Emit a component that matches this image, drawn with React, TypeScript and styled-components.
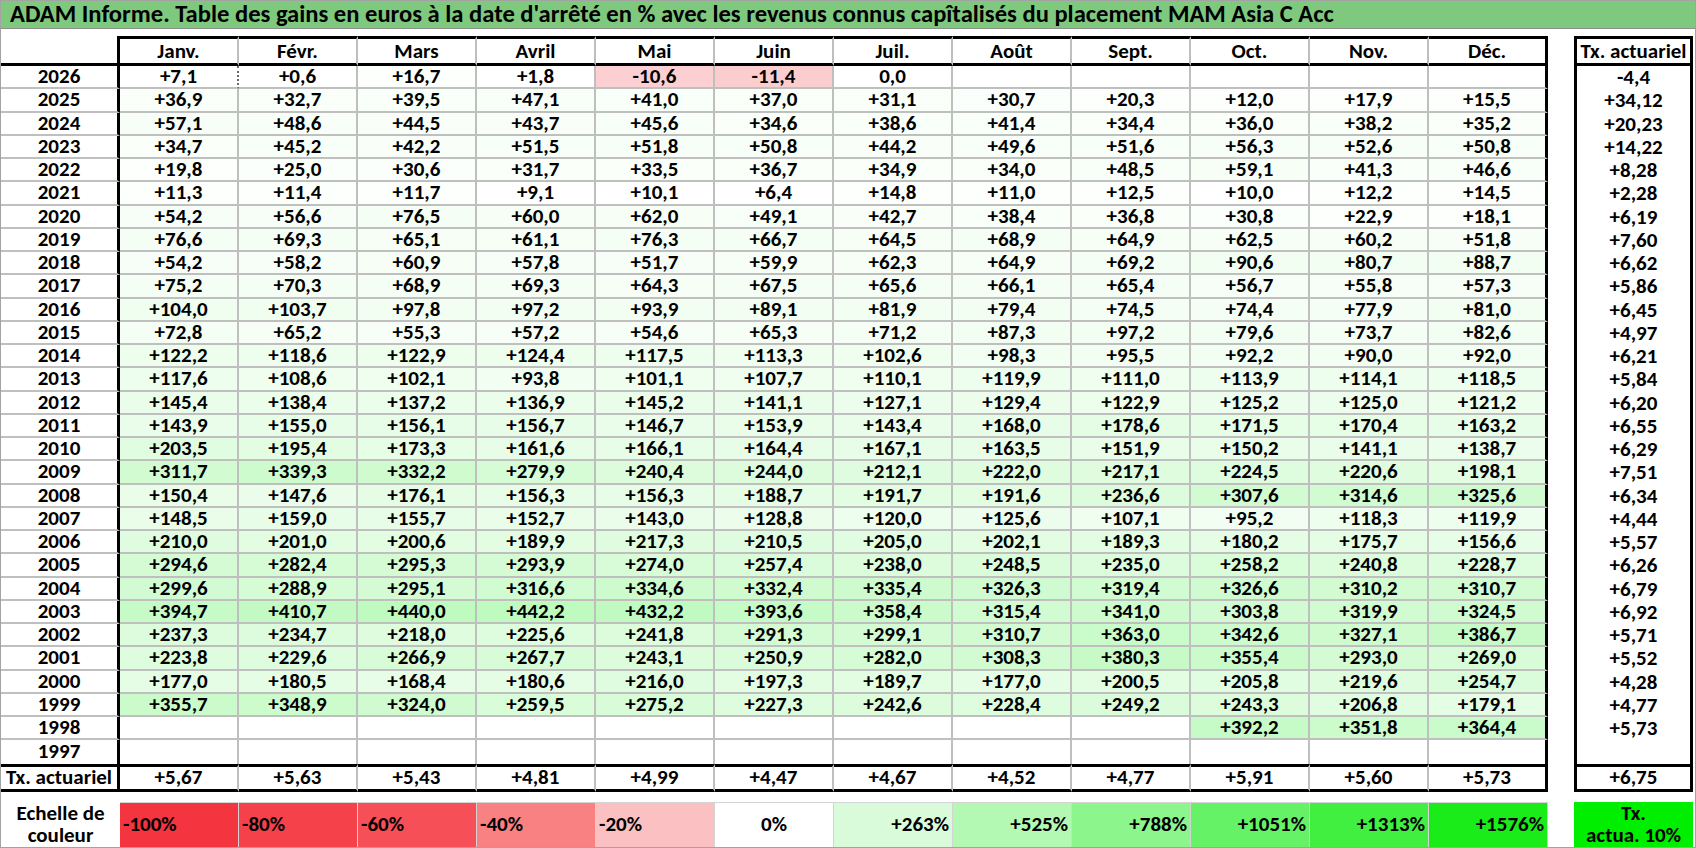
import { Fragment } from 'react';
import styled, { createGlobalStyle } from 'styled-components';

const GlobalStyle = createGlobalStyle`
  html, body {
    margin: 0;
    padding: 0;
    background: #ffffff;
  }
  body {
    font-family: Carlito, Lato, 'Liberation Sans', sans-serif;
    color: #000;
  }
`;

const months = ['Janv.', 'Févr.', 'Mars', 'Avril', 'Mai', 'Juin', 'Juil.', 'Août', 'Sept.', 'Oct.', 'Nov.', 'Déc.'];

// year | 12 monthly gains ('.' = empty) | tx actuariel
const raw = [
  '2026|+7,1 +0,6 +16,7 +1,8 -10,6 -11,4 0,0 . . . . .|-4,4',
  '2025|+36,9 +32,7 +39,5 +47,1 +41,0 +37,0 +31,1 +30,7 +20,3 +12,0 +17,9 +15,5|+34,12',
  '2024|+57,1 +48,6 +44,5 +43,7 +45,6 +34,6 +38,6 +41,4 +34,4 +36,0 +38,2 +35,2|+20,23',
  '2023|+34,7 +45,2 +42,2 +51,5 +51,8 +50,8 +44,2 +49,6 +51,6 +56,3 +52,6 +50,8|+14,22',
  '2022|+19,8 +25,0 +30,6 +31,7 +33,5 +36,7 +34,9 +34,0 +48,5 +59,1 +41,3 +46,6|+8,28',
  '2021|+11,3 +11,4 +11,7 +9,1 +10,1 +6,4 +14,8 +11,0 +12,5 +10,0 +12,2 +14,5|+2,28',
  '2020|+54,2 +56,6 +76,5 +60,0 +62,0 +49,1 +42,7 +38,4 +36,8 +30,8 +22,9 +18,1|+6,19',
  '2019|+76,6 +69,3 +65,1 +61,1 +76,3 +66,7 +64,5 +68,9 +64,9 +62,5 +60,2 +51,8|+7,60',
  '2018|+54,2 +58,2 +60,9 +57,8 +51,7 +59,9 +62,3 +64,9 +69,2 +90,6 +80,7 +88,7|+6,62',
  '2017|+75,2 +70,3 +68,9 +69,3 +64,3 +67,5 +65,6 +66,1 +65,4 +56,7 +55,8 +57,3|+5,86',
  '2016|+104,0 +103,7 +97,8 +97,2 +93,9 +89,1 +81,9 +79,4 +74,5 +74,4 +77,9 +81,0|+6,45',
  '2015|+72,8 +65,2 +55,3 +57,2 +54,6 +65,3 +71,2 +87,3 +97,2 +79,6 +73,7 +82,6|+4,97',
  '2014|+122,2 +118,6 +122,9 +124,4 +117,5 +113,3 +102,6 +98,3 +95,5 +92,2 +90,0 +92,0|+6,21',
  '2013|+117,6 +108,6 +102,1 +93,8 +101,1 +107,7 +110,1 +119,9 +111,0 +113,9 +114,1 +118,5|+5,84',
  '2012|+145,4 +138,4 +137,2 +136,9 +145,2 +141,1 +127,1 +129,4 +122,9 +125,2 +125,0 +121,2|+6,20',
  '2011|+143,9 +155,0 +156,1 +156,7 +146,7 +153,9 +143,4 +168,0 +178,6 +171,5 +170,4 +163,2|+6,55',
  '2010|+203,5 +195,4 +173,3 +161,6 +166,1 +164,4 +167,1 +163,5 +151,9 +150,2 +141,1 +138,7|+6,29',
  '2009|+311,7 +339,3 +332,2 +279,9 +240,4 +244,0 +212,1 +222,0 +217,1 +224,5 +220,6 +198,1|+7,51',
  '2008|+150,4 +147,6 +176,1 +156,3 +156,3 +188,7 +191,7 +191,6 +236,6 +307,6 +314,6 +325,6|+6,34',
  '2007|+148,5 +159,0 +155,7 +152,7 +143,0 +128,8 +120,0 +125,6 +107,1 +95,2 +118,3 +119,9|+4,44',
  '2006|+210,0 +201,0 +200,6 +189,9 +217,3 +210,5 +205,0 +202,1 +189,3 +180,2 +175,7 +156,6|+5,57',
  '2005|+294,6 +282,4 +295,3 +293,9 +274,0 +257,4 +238,0 +248,5 +235,0 +258,2 +240,8 +228,7|+6,26',
  '2004|+299,6 +288,9 +295,1 +316,6 +334,6 +332,4 +335,4 +326,3 +319,4 +326,6 +310,2 +310,7|+6,79',
  '2003|+394,7 +410,7 +440,0 +442,2 +432,2 +393,6 +358,4 +315,4 +341,0 +303,8 +319,9 +324,5|+6,92',
  '2002|+237,3 +234,7 +218,0 +225,6 +241,8 +291,3 +299,1 +310,7 +363,0 +342,6 +327,1 +386,7|+5,71',
  '2001|+223,8 +229,6 +266,9 +267,7 +243,1 +250,9 +282,0 +308,3 +380,3 +355,4 +293,0 +269,0|+5,52',
  '2000|+177,0 +180,5 +168,4 +180,6 +216,0 +197,3 +189,7 +177,0 +200,5 +205,8 +219,6 +254,7|+4,28',
  '1999|+355,7 +348,9 +324,0 +259,5 +275,2 +227,3 +242,6 +228,4 +249,2 +243,3 +206,8 +179,1|+4,77',
  '1998|. . . . . . . . . +392,2 +351,8 +364,4|+5,73',
  '1997|. . . . . . . . . . . .|.',
];

const rows = raw.map((line) => {
  const [year, values, tx] = line.split('|');
  return {
    year,
    values: values.split(' ').map((v) => (v === '.' ? '' : v)),
    tx: tx === '.' ? '' : tx,
  };
});

const yearlyTx = ['+5,67', '+5,63', '+5,43', '+4,81', '+4,99', '+4,47', '+4,67', '+4,52', '+4,77', '+5,91', '+5,60', '+5,73'];

const scale = [
  { label: '-100%', bg: '#f4343e', align: 'left' },
  { label: '-80%', bg: '#f5414a', align: 'left' },
  { label: '-60%', bg: '#f64f57', align: 'left' },
  { label: '-40%', bg: '#f98182', align: 'left' },
  { label: '-20%', bg: '#fbc0c2', align: 'left' },
  { label: '0%', bg: '#ffffff', align: 'center' },
  { label: '+263%', bg: '#d9fbd9', align: 'right' },
  { label: '+525%', bg: '#b3f8b3', align: 'right' },
  { label: '+788%', bg: '#8cf58c', align: 'right' },
  { label: '+1051%', bg: '#66f266', align: 'right' },
  { label: '+1313%', bg: '#40ef40', align: 'right' },
  { label: '+1576%', bg: '#1aec1a', align: 'right' },
];

const mix = (t: number, r: number, g: number, b: number) => {
  const c = (to: number) => Math.round(255 + (to - 255) * t);
  return `rgb(${c(r)}, ${c(g)}, ${c(b)})`;
};

const cellColor = (text: string) => {
  if (!text) return '#ffffff';
  const v = parseFloat(text.replace(',', '.'));
  if (v < 0) return mix(Math.min(1, -v / 46), 244, 52, 62);
  return mix(Math.min(1, v / 1576), 26, 236, 26);
};

const THICK = '3px solid #000';
const GRID = '2px solid #bfbfbf';
const COLUMNS = '119px repeat(12, 119px) 26px 119px';

const App = () => {
  return (
    <>
      <GlobalStyle />
      <Frame>
        <TitleBar>
          ADAM Informe. Table des gains en euros à la date d'arrêté en % avec les revenus connus capîtalisés du placement MAM Asia C Acc
        </TitleBar>

        <Sheet>
          <YearHead />
          {months.map((m, i) => (
            <MonthHead key={m} $last={i === 11}>
              {m}
            </MonthHead>
          ))}
          <Spacer />
          <TxHead>Tx. actuariel</TxHead>

          {rows.map((row, r) => {
            const lastRow = r === rows.length - 1;
            return (
              <Fragment key={row.year}>
                <YearCell $lastRow={lastRow}>{row.year}</YearCell>
                {row.values.map((v, i) => (
                  <ValueCell
                    key={i}
                    $bg={cellColor(v)}
                    $last={i === 11}
                    $lastRow={lastRow}
                    $dotted={r === 0 && i === 0}
                  >
                    {v}
                  </ValueCell>
                ))}
                <Spacer />
                <TxCell>{row.tx}</TxCell>
              </Fragment>
            );
          })}

          <FooterLabel>Tx. actuariel</FooterLabel>
          {yearlyTx.map((v, i) => (
            <FooterCell key={i} $last={i === 11}>
              {v}
            </FooterCell>
          ))}
          <Spacer />
          <FooterTx>+6,75</FooterTx>
        </Sheet>

        <ScaleRow>
          <ScaleLabel>
            <span>Echelle de</span>
            <span>couleur</span>
          </ScaleLabel>
          {scale.map((s) => (
            <ScaleCell key={s.label} $bg={s.bg} $align={s.align}>
              {s.label}
            </ScaleCell>
          ))}
          <Spacer />
          <ScaleTx>
            <span>Tx.</span>
            <span>actua. 10%</span>
          </ScaleTx>
        </ScaleRow>
      </Frame>
    </>
  );
};

export default App;

const Frame = styled.div`
  width: 1696px;
  height: 848px;
  box-sizing: border-box;
  border: 1px solid #a3a3a3;
  background: #fff;
  overflow: hidden;
`;

const TitleBar = styled.div`
  height: 28px;
  box-sizing: border-box;
  display: flex;
  align-items: center;
  padding-left: 9px;
  background: #7fc97f;
  border-bottom: 1px solid #8d8d8d;
  font-size: 24.6px;
  line-height: 1;
  font-weight: 700;
  white-space: nowrap;
`;

const Sheet = styled.div`
  display: grid;
  grid-template-columns: ${COLUMNS};
  grid-template-rows: 30px repeat(30, 23.25px) 28px;
  margin-top: 7px;
  font-size: 21px;
  line-height: 1;
  font-weight: 700;
`;

const CellBase = styled.div`
  box-sizing: border-box;
  display: flex;
  align-items: center;
  justify-content: center;
  white-space: nowrap;
`;

const YearHead = styled(CellBase)`
  border-right: ${THICK};
  border-bottom: ${THICK};
`;

const MonthHead = styled(CellBase)<{ $last?: boolean }>`
  border-top: ${THICK};
  border-bottom: ${THICK};
  border-right: ${(p) => (p.$last ? THICK : GRID)};
`;

const Spacer = styled.div``;

const TxHead = styled(CellBase)`
  border: ${THICK};
`;

const YearCell = styled(CellBase)<{ $lastRow?: boolean }>`
  border-right: ${THICK};
  border-bottom: ${(p) => (p.$lastRow ? 'none' : GRID)};
`;

const ValueCell = styled(CellBase)<{ $bg: string; $last?: boolean; $lastRow?: boolean; $dotted?: boolean }>`
  background: ${(p) => p.$bg};
  border-bottom: ${(p) => (p.$lastRow ? 'none' : GRID)};
  border-right: ${(p) => (p.$last ? THICK : p.$dotted ? '2px dotted #6a6a6a' : GRID)};
`;

const TxCell = styled(CellBase)`
  border-left: ${THICK};
  border-right: ${THICK};
`;

const FooterLabel = styled(CellBase)`
  border-top: ${THICK};
  border-bottom: ${THICK};
  border-right: ${THICK};
`;

const FooterCell = styled(CellBase)<{ $last?: boolean }>`
  border-top: ${THICK};
  border-bottom: ${THICK};
  border-right: ${(p) => (p.$last ? THICK : GRID)};
`;

const FooterTx = styled(CellBase)`
  border: ${THICK};
`;

const ScaleRow = styled.div`
  display: grid;
  grid-template-columns: ${COLUMNS};
  height: 45px;
  margin-top: 10px;
  font-size: 21px;
  line-height: 1;
  font-weight: 700;
`;

const ScaleLabel = styled.div`
  display: flex;
  flex-direction: column;
  align-items: center;
  justify-content: center;
  gap: 1px;
  text-align: center;
`;

const ScaleCell = styled.div<{ $bg: string; $align: string }>`
  box-sizing: border-box;
  display: flex;
  align-items: center;
  justify-content: ${(p) => (p.$align === 'left' ? 'flex-start' : p.$align === 'right' ? 'flex-end' : 'center')};
  padding: 0 3px;
  background: ${(p) => p.$bg};
  border-top: 1px solid #d4d4d4;
  border-right: 1px solid #d4d4d4;
`;

const ScaleTx = styled.div`
  display: flex;
  flex-direction: column;
  align-items: center;
  justify-content: center;
  gap: 1px;
  text-align: center;
  background: #00ee00;
`;
